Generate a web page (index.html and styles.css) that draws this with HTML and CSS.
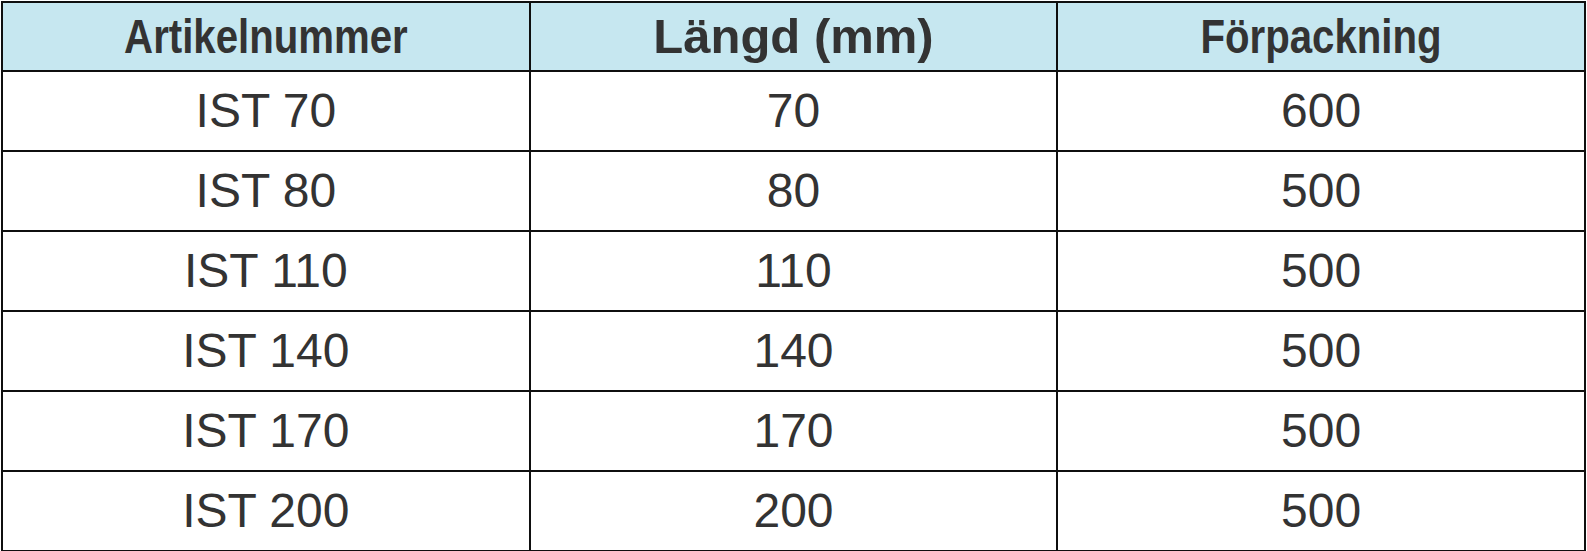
FILE: index.html
```html
<!DOCTYPE html>
<html lang="sv">
<head>
<meta charset="utf-8">
<title>Artiklar</title>
<link rel="stylesheet" href="styles.css">
</head>
<body>
<table class="spec">
  <thead>
    <tr>
      <th><span class="narrow">Artikelnummer</span></th>
      <th>Längd (mm)</th>
      <th><span class="narrow">Förpackning</span></th>
    </tr>
  </thead>
  <tbody>
    <tr><td>IST 70</td><td>70</td><td>600</td></tr>
    <tr><td>IST 80</td><td>80</td><td>500</td></tr>
    <tr><td>IST 110</td><td>110</td><td>500</td></tr>
    <tr><td>IST 140</td><td>140</td><td>500</td></tr>
    <tr><td>IST 170</td><td>170</td><td>500</td></tr>
    <tr><td>IST 200</td><td>200</td><td>500</td></tr>
  </tbody>
</table>
</body>
</html>
```

FILE: styles.css
```css
html, body {
  margin: 0;
  padding: 0;
  background: #ffffff;
}

.spec {
  margin: 1px 0 0 1px;
  width: 1585px;
  border-collapse: collapse;
  table-layout: fixed;
  font-family: "Liberation Sans", Arial, sans-serif;
  color: #333333;
}

.spec th,
.spec td {
  border: 2px solid #0f0f0f;
  padding: 0;
  text-align: center;
  vertical-align: middle;
}

.spec th {
  height: 67px;
  background: #c6e7f0;
  font-weight: bold;
  font-size: 49px;
  line-height: 1;
  color: #333333;
}

.spec td {
  height: 78px;
  font-size: 48px;
  line-height: 1;
}

.narrow {
  display: inline-block;
  transform: scaleX(0.82);
  transform-origin: center;
}
```
